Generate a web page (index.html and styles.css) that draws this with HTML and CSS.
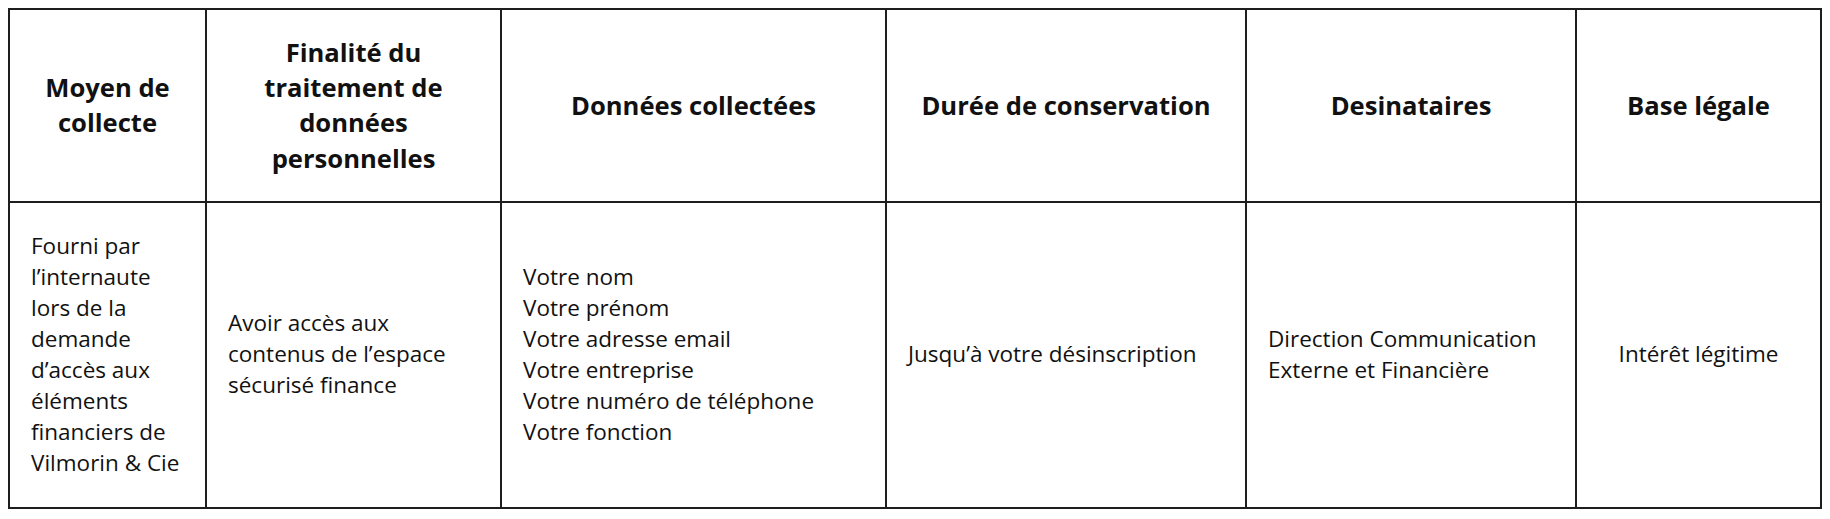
FILE: index.html
```html
<!DOCTYPE html>
<html lang="fr">
<head>
<meta charset="utf-8">
<title>Données personnelles</title>
<link rel="stylesheet" href="styles.css">
</head>
<body>
<table class="rgpd">
  <colgroup>
    <col class="c1"><col class="c2"><col class="c3"><col class="c4"><col class="c5"><col class="c6">
  </colgroup>
  <thead>
    <tr>
      <th>Moyen de collecte</th>
      <th>Finalité du traitement de données personnelles</th>
      <th>Données collectées</th>
      <th>Durée de conservation</th>
      <th>Desinataires</th>
      <th>Base légale</th>
    </tr>
  </thead>
  <tbody>
    <tr>
      <td>Fourni par l’internaute lors de la demande d’accès aux éléments financiers de Vilmorin &amp; Cie</td>
      <td>Avoir accès aux contenus de l’espace sécurisé finance</td>
      <td>Votre nom<br>Votre prénom<br>Votre adresse email<br>Votre entreprise<br>Votre numéro de téléphone<br>Votre fonction</td>
      <td>Jusqu’à votre désinscription</td>
      <td>Direction Communication Externe et Financière</td>
      <td class="center">Intérêt légitime</td>
    </tr>
  </tbody>
</table>
</body>
</html>
```

FILE: styles.css
```css
body {
  margin: 8px;
  background: #fff;
  font-family: "Open Sans", "Liberation Sans", sans-serif;
  color: #111;
}

.rgpd {
  border-collapse: collapse;
  width: 1812px;
  table-layout: fixed;
}

.c1 { width: 197px; }
.c2 { width: 295px; }
.c3 { width: 385px; }
.c4 { width: 360px; }
.c5 { width: 330px; }
.c6 { width: 245px; }

.rgpd th,
.rgpd td {
  border: 2px solid #1e1e1e;
  vertical-align: middle;
}

.rgpd th {
  font-weight: 700;
  font-size: 25.6px;
  line-height: 35.2px;
  text-align: center;
  padding: 25px 21px 25px;
}

.rgpd td {
  font-size: 22.5px;
  line-height: 31px;
  text-align: left;
  padding: 27px 21px 29px;
}

.rgpd td.center {
  text-align: center;
}
```
